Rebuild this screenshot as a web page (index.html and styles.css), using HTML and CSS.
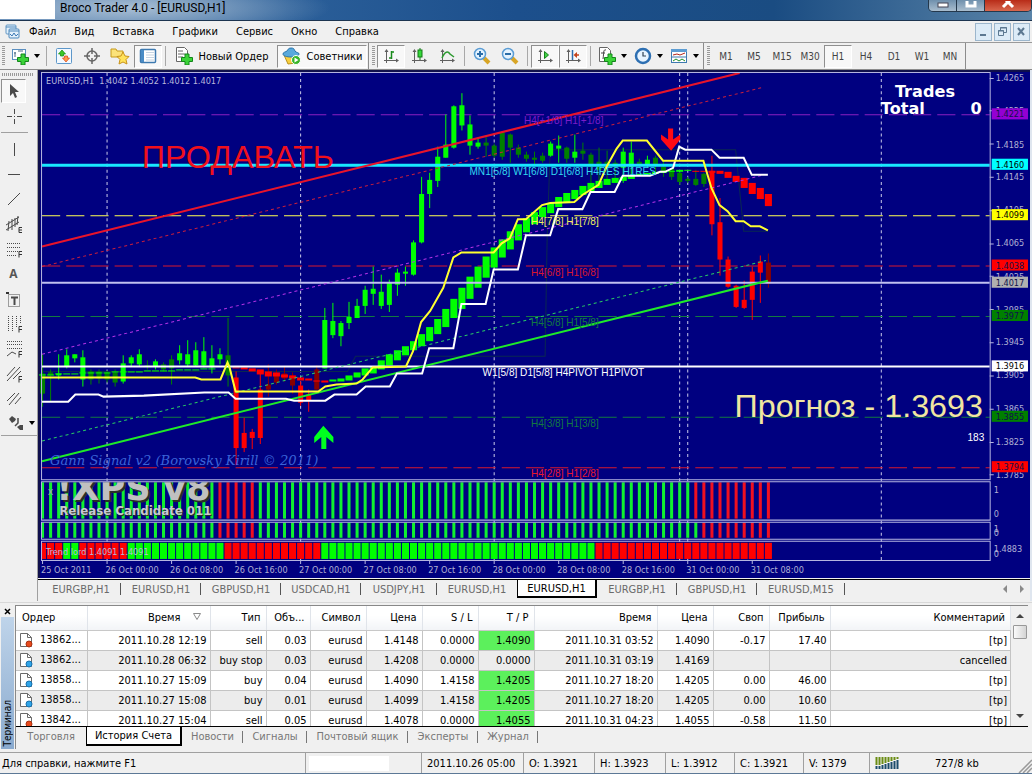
FILE: index.html
```html
<!DOCTYPE html>
<html lang="ru">
<head>
<meta charset="utf-8">
<title>Broco Trader 4.0 - [EURUSD,H1]</title>
<link rel="stylesheet" href="styles.css">
</head>
<body>
<div class="window">
  <header class="titlebar">
    <span class="logo-blank"></span>
    <span class="title">Broco Trader 4.0 - [EURUSD,H1]</span>
    <div class="caption-buttons">
      <button class="cap" aria-label="Свернуть"><svg width="12" height="10"><rect x="1" y="2" width="10" height="4" fill="#fff" stroke="#445"/></svg></button>
      <button class="cap" aria-label="Развернуть"><svg width="12" height="10"><rect x="2" y="-2" width="8" height="7" fill="none" stroke="#fff" stroke-width="3"/></svg></button>
      <button class="cap cap-close" aria-label="Закрыть"><svg width="14" height="10"><path d="M2 -4L12 6M12 -4L2 6" stroke="#fff" stroke-width="3"/></svg></button>
    </div>
  </header>

  <nav class="menubar">
    <svg class="menu-icon" width="15" height="15"><rect x="1" y="1" width="10" height="9" rx="1" fill="#e4f1fb" stroke="#6397c4"/><rect x="4" y="5" width="10" height="9" rx="1" fill="#e4f1fb" stroke="#4d87bb"/><path d="M1 3h10M4 7h10" stroke="#4d87bb"/><path d="M5 10l2 2 2-3 2 3 2-2" fill="none" stroke="#3c78b4"/></svg>
    <a href="#">Файл</a><a href="#">Вид</a><a href="#">Вставка</a><a href="#">Графики</a><a href="#">Сервис</a><a href="#">Окно</a><a href="#">Справка</a>
    <div class="mdi">
      <button aria-label="Свернуть окно"><svg width="11" height="11"><path d="M2 9h6" stroke="#5c7891" stroke-width="2"/></svg></button>
      <button aria-label="Восстановить окно"><svg width="11" height="11"><path d="M3.500 4V1.500h6v5H7M3 2h7" fill="none" stroke="#5c7891"/><path d="M1.500 4.500h5v5h-5zM1 5h6" fill="none" stroke="#5c7891"/></svg></button>
      <button aria-label="Закрыть окно"><svg width="11" height="11"><path d="M2 2l6 7M8 2L2 9" stroke="#5c7891" stroke-width="2"/></svg></button>
    </div>
  </nav>

  <div class="toolbar">
    <i class="grip"></i>
    <button class="tb wide" aria-label="Новый график"><svg width="18" height="18"><rect x="1.500" y="2.500" width="13" height="10" fill="#fff" stroke="#5b8fc0"/><path d="M4 5v5M3 6h2M7 4h5" stroke="#4d6b85"/><use href="#plus"/></svg><i class="caret"></i></button>
    <i class="sep"></i>
    <button class="tb" aria-label="Обзор рынка"><svg width="18" height="18"><rect x="1.500" y="1.500" width="15" height="15" rx="1" fill="#f3f9ff" stroke="#5d97c9"/><path d="M7 3l3.500 4H8.500v2h-3V7h-2z" fill="#3cc828" stroke="#138a0c" stroke-width=".7"/><path d="M11 15l3.500-4h-2V9h-3v2h-2z" fill="#ff9a4a" stroke="#d8441a" stroke-width=".7"/></svg></button>
    <button class="tb" aria-label="Окно данных"><svg width="18" height="18"><circle cx="9" cy="9" r="5" fill="none" stroke="#666" stroke-width="1.500"/><path d="M9 1v6M9 11v6M1 9h6M11 9h6" stroke="#666" stroke-width="1.500"/></svg></button>
    <button class="tb" aria-label="Навигатор"><svg width="20" height="18"><path d="M1 2h5l1 2h6v6H1z" fill="#fbe27a" stroke="#c79a1a"/><path d="M13 5l2 4 4 .500-3 3 1 4.500-4-2-4 2 1-4.500-3-3 4-.500z" fill="#ffe25a" stroke="#c8921a"/></svg></button>
    <button class="tb pressed" aria-label="Терминал"><svg width="18" height="18"><rect x="1.500" y="2.500" width="15" height="13" rx="1" fill="#fff" stroke="#3e7ab0" stroke-width="1.500"/><rect x="2" y="3" width="3" height="12" fill="#4a8cc6"/><path d="M7 5.500h8M7 8h8M7 10.500h8M7 13h8" stroke="#c6d4e2"/></svg></button>
    <i class="sep"></i>
    <button class="tb order"><svg width="18" height="18"><path d="M1.500.5h8l3 3v11h-11z" fill="#fff" stroke="#666"/><path d="M3 4h5M3 7h7M3 10h5" stroke="#666"/><use href="#plus"/></svg>Новый Ордер</button>
    <button class="tb experts pressed"><svg width="20" height="18"><path d="M2 8l13 0-1 8-8 1z" fill="#f8cf3e" stroke="#b8901c"/><path d="M1 7c0-2 3-2 4-3s1-3 4-3 3 1 4 3 4 1 4 3-4 3-8 3-8-1-8-3z" fill="#59a9dc" stroke="#2a74ab"/><circle cx="14" cy="13" r="4.500" fill="#38b528" stroke="#fff"/><path d="M12.500 10.500l4 2.500-4 2.500z" fill="#fff"/></svg>Советники</button>
    <i class="edge"></i><i class="grip"></i>
    <button class="tb pressed" aria-label="Бары"><svg width="18" height="18"><use href="#axes"/><path d="M9.500 4v8M9 5h3M7 11h3" stroke="#198a1c" stroke-width="1.500"/></svg></button>
    <button class="tb" aria-label="Свечи"><svg width="18" height="18"><use href="#axes"/><path d="M10 1v12" stroke="#127a14"/><rect x="8" y="3" width="4" height="7" fill="#35d83a" stroke="#127a14"/></svg></button>
    <button class="tb" aria-label="Линия"><svg width="18" height="18"><use href="#axes"/><path d="M4 11c3-7 6-7 8-4l4 3" fill="none" stroke="#2d9a30" stroke-width="1.500"/></svg></button>
    <i class="sep"></i>
    <button class="tb" aria-label="Приблизить"><svg width="18" height="18"><use href="#lens"/><path d="M7 4v6M4 7h6" stroke="#2a6da8" stroke-width="2"/></svg></button>
    <button class="tb" aria-label="Отдалить"><svg width="18" height="18"><use href="#lens"/><path d="M4 7h6" stroke="#2a6da8" stroke-width="2"/></svg></button>
    <i class="sep"></i>
    <button class="tb pressed" aria-label="Автопрокрутка"><svg width="18" height="18"><use href="#axes"/><path d="M8.500 4.500l4 3.500-4 3.500z" fill="#3fd044" stroke="#15821a"/></svg></button>
    <button class="tb pressed" aria-label="Сдвиг графика"><svg width="18" height="18"><use href="#axes"/><path d="M8.500 3v10" stroke="#2b6cae" stroke-width="1.500"/><path d="M15 8h-4" stroke="#c4421a" stroke-width="1.500"/><path d="M13 5v6l-3.500-3z" fill="#c4421a"/></svg></button>
    <i class="sep"></i>
    <button class="tb wide" aria-label="Индикаторы"><svg width="18" height="18"><path d="M1.500.5h8l3 3v11h-11z" fill="#fff" stroke="#666"/><path d="M8 3c-3-1-2 3-3 9M3 6h4" fill="none" stroke="#444"/><use href="#plus"/></svg><i class="caret"></i></button>
    <button class="tb wide" aria-label="Периоды"><svg width="18" height="18"><circle cx="9" cy="9" r="7" fill="#e8f4ff" stroke="#2d6fb2" stroke-width="2.500"/><path d="M9 5v4h3" fill="none" stroke="#345" stroke-width="1.200"/></svg><i class="caret"></i></button>
    <button class="tb wide" aria-label="Шаблоны"><svg width="18" height="18"><rect x="1.500" y="2.500" width="15" height="13" fill="#fff" stroke="#3e7ab0"/><rect x="1" y="2" width="16" height="3" fill="#5d9dd3"/><path d="M3 8l4-1 3 1 5-2" fill="none" stroke="#b3261a"/><path d="M1 10h16" stroke="#3e7ab0"/><path d="M3 14l3-2 3 2 3-2 3 2" fill="none" stroke="#1f8e25"/></svg><i class="caret"></i></button>
    <i class="edge"></i><i class="grip"></i>
    <button class="tb tf">M1</button><button class="tb tf">M5</button><button class="tb tf">M15</button><button class="tb tf">M30</button><button class="tb tf pressed">H1</button><button class="tb tf">H4</button><button class="tb tf">D1</button><button class="tb tf">W1</button><button class="tb tf">MN</button>
    <i class="edge"></i>
  </div>

  <main class="workspace">
    <aside class="tools">
      <i class="hgrip"></i>
      <button class="tool pressed" aria-label="Курсор"><svg width="18" height="18"><path d="M5 2v12l3-3 2 5 2-1-2-5h4z" fill="#4a4a4a"/></svg></button>
      <button class="tool" aria-label="Перекрестие"><svg width="18" height="18"><path d="M9.500 2v5M9.500 12v5M2 9.500h5M12 9.500h5M9 9.500h1" stroke="#4a4a4a"/></svg></button>
      <i class="hsep"></i>
      <button class="tool" aria-label="Вертикальная линия"><svg width="18" height="18"><path d="M9.500 3v13" stroke="#4a4a4a"/></svg></button>
      <button class="tool" aria-label="Горизонтальная линия"><svg width="18" height="18"><path d="M3 9.500h12" stroke="#4a4a4a"/></svg></button>
      <button class="tool" aria-label="Трендовая линия"><svg width="18" height="18"><path d="M3 15L15 3" stroke="#4a4a4a"/></svg></button>
      <button class="tool" aria-label="Канал"><svg width="18" height="18"><path d="M1 10L14 2M1 15L14 7M4 6l-1 10M7 4v11M10 3v9M13 1l-1 9" stroke="#4a4a4a"/><path d="M17 12.500h-3v5h3M14 15h3" fill="none" stroke="#333"/></svg></button>
      <button class="tool" aria-label="Фибоначчи"><svg width="18" height="18"><path d="M2 3.500h14M2 7.500h14M2 11.500h14M2 15.500h9" stroke="#4a4a4a" stroke-dasharray="1 1"/><use href="#fmark"/></svg></button>
      <button class="tool letter">A</button>
      <button class="tool" aria-label="Метка"><svg width="18" height="18"><rect x="3.500" y="4.500" width="11" height="12" fill="none" stroke="#4a4a4a" stroke-dasharray="1 1"/><path d="M6 7.500h7M9.500 8v7" stroke="#4a4a4a" stroke-width="2"/><path d="M1 3h3" stroke="#333" stroke-width="2"/></svg></button>
      <button class="tool" aria-label="Временные зоны"><svg width="18" height="18"><path d="M3.500 1v15M7.500 1v15M11.500 1v11M15.500 1v8" stroke="#4a4a4a" stroke-dasharray="1 1"/><use href="#fmark"/></svg></button>
      <button class="tool" aria-label="Веер"><svg width="18" height="18"><path d="M2 1.500h15M2 4.500h15M2 8.500h15" stroke="#4a4a4a" stroke-dasharray="1 1"/><path d="M2 16l5-4 4 2" fill="none" stroke="#4a4a4a"/><use href="#fmark"/></svg></button>
      <button class="tool" aria-label="Канал Фибоначчи"><svg width="18" height="18"><path d="M2 11L10 2M2 16L15 2M8 14l8-8" stroke="#4a4a4a"/><use href="#fmark"/></svg></button>
      <button class="tool" aria-label="Параллельные линии"><svg width="18" height="18"><path d="M2 11l8-8M4 15L14 3M10 14l6-7" stroke="#4a4a4a"/></svg></button>
      <button class="tool arrows" aria-label="Стрелки"><svg width="18" height="18"><path d="M2 5l3-3 4 3-1 2-3 2z" fill="#4a4a4a"/><path d="M11 4v5l-3 3" fill="none" stroke="#4a4a4a" stroke-width="1.500"/><path d="M10 13l3-2 3 0 0 5-3 0z" fill="#4a4a4a"/></svg><i class="caret"></i></button>
    </aside>

    <section class="chart-area">
      <svg class="chart" viewBox="38 71 984 504" id="chart">
        <rect x="38" y="71" width="984" height="504" fill="#000080"/>
        <path d="M38 72h984M39 71v504" stroke="#10104c" stroke-width="2"/>
        <g class="grid"><path d="M106.500 74V557M298.500 74V557M490.500 74V557M674.500 74V557M682.500 74V557M874.500 74V557"/></g>
        <path class="cloud" d="M42 370H345L353 355H541L543 240L546 150H730L738 231H762"/>
        <g class="level">
          <path d="M42 115.500H982" stroke="#8a1fc0"/><path d="M42 215.500H982" stroke="#ffff50"/><path d="M42 265.500H982" stroke="#d8182c"/><path d="M42 315.500H982" stroke="#127a40"/><path d="M42 415.500H982" stroke="#127a40"/><path d="M42 465.500H982" stroke="#d8182c"/>
        </g>
        <g id="candles"></g>
        <g id="ribbon"></g>
        <path d="M42 282H982" stroke="#c0c0f0" stroke-width="2"/>
        <path d="M42 365H982" stroke="#fff" stroke-width="2"/>
        <path d="M42 165.500H982" stroke="#18e8ff" stroke-width="3"/>
        <g fill="none">
          <path d="M42 246L734 74" stroke="#e8142a" stroke-width="2"/>
          <path d="M42 266L758 88" stroke="#c81e3c" stroke-dasharray="3 3"/>
          <path d="M42 353L758 175" stroke="#b432e6" stroke-dasharray="3 3"/>
          <path d="M42 439L760 260" stroke="#28c864" stroke-dasharray="3 3"/>
          <path d="M42 459L762 280" stroke="#1eeb28" stroke-width="2"/>
          <path d="M42 400H68L75 393H98L103 395L143 394L203 391H227L234 397H284L292 399H323L332 393H354L363 385H387L394 372H419L426 347H450L458 303H482L490 269H514L522 235H546L554 209H578L586 192H610L618 176H645L655 172H660L668 168L674 147L680 150H706L714 158H738L746 175H762" stroke="#fff" stroke-width="2"/>
          <path d="M42 376H194L200 378H219L226 361L228 366L234 390H316L323 385L334 383L354 382L360 378L370 366L403 365L410 350L418 321L427 310L440 287L450 257L458 252H490L498 243L506 238L514 219H522L538 205L546 203L570 202L578 195L594 185L602 167L612 149L618 141H642L658 161H698L706 188L714 205L722 211L730 221H738L745 226H754L762 230" stroke="#ffff30" stroke-width="2"/>
        </g>
        <path d="M663 129h5v11l7-5v5l-9 11-10-11v-5l7 5z" fill="#ff0a14"/>
        <path d="M319 447h5v-12l7 6v-6l-10-11-9 11v6l7-6z" fill="#00ff20"/>

        <text class="head" x="46" y="85">EURUSD,H1&#160; 1.4042 1.4052 1.4012 1.4017</text>
        <text class="signal" x="141" y="168">ПРОДАВАТЬ</text>
        <text class="forecast" x="729" y="415">Прогноз - 1.3693</text>
        <text class="stats" x="888" y="98">Trades</text><text class="stats" x="874" y="115">Total</text><text class="stats" x="963" y="115">0</text>
        <text class="lvl" x="960" y="439" fill="#fff">183</text>
        <text class="lvl" x="520" y="125" fill="#7a1cc8">H4[+1/8] H1[+1/8]</text>
        <text class="lvl" x="466" y="175" fill="#32d8f0">MN1[5/8] W1[6/8] D1[6/8] H4RES H1RES</text>
        <text class="lvl" x="527" y="225" fill="#f0f060">H4[7/8] H1[7/8]</text>
        <text class="lvl" x="527" y="275" fill="#d8182c">H4[6/8] H1[6/8]</text>
        <text class="lvl" x="527" y="325" fill="#127a40">H4[5/8] H1[5/8]</text>
        <text class="lvl" x="479" y="375" fill="#fff">W1[5/8] D1[5/8] H4PIVOT H1PIVOT</text>
        <text class="lvl" x="527" y="425" fill="#127a40">H4[3/8] H1[3/8]</text>
        <text class="lvl" x="527" y="475" fill="#e8182c">H4[2/8] H1[2/8]</text>
        <text class="gann" x="50" y="463">Gann Signal v2 (Borovsky Kirill © 2011)</text>

        <g id="indicators"></g>
        <clipPath id="xpsclip"><rect x="42" y="480" width="940" height="37"/></clipPath>
        <g clip-path="url(#xpsclip)">
          <text class="xps shadow" x="58" y="500">!XPS v8</text><text class="xps" x="56" y="498">!XPS v8</text>
          <text class="rc shadow" x="60" y="513">Release Candidate 011</text><text class="rc" x="59" y="512">Release Candidate 011</text>
        </g>
        <text class="lvl" x="48" y="493" fill="#a0a0c0">x</text>
        <text class="head" x="46" y="552">Trend lord 1.4091 1.4091</text>
        <g class="frame"><path d="M41.500 73.500h941v404h-941zM41.500 479.500h941v38h-941zM41.500 519.500h941v17h-941zM41.500 538.500h941v19h-941z"/><path d="M982 79.500h4M982 111.500h4M982 144.500h4M982 177.500h4M982 210.500h4M982 243.500h4M982 275.500h4M982 308.500h4M982 341.500h4M982 374.500h4M982 407.500h4M982 440.500h4M982 472.500h4M42.500 558v3M106.500 558v3M170.500 558v3M234.500 558v3M298.500 558v3M362.500 558v3M426.500 558v3M490.500 558v3M554.500 558v3M618.500 558v3M682.500 558v3M746.500 558v3"/></g>
        <g id="axis"></g>
      </svg>
      <nav class="chart-tabs">
        <a href="#">EURGBP,H1</a><a href="#">EURUSD,H1</a><a href="#">GBPUSD,H1</a><a href="#">USDCAD,H1</a><a href="#" class="narrow">USDJPY,H1</a><a href="#" class="plain">EURUSD,H1</a><a href="#" class="active">EURUSD,H1</a><a href="#">EURGBP,H1</a><a href="#">GBPUSD,H1</a><a href="#" class="long">EURUSD,M15</a>
        <span class="tab-scroll"><svg width="24" height="8"><path d="M5 0v8L1 4zM18 0v8l4-4z" fill="#8a8a8a"/></svg></span>
      </nav>
    </section>
  </main>

  <section class="terminal">
    <div class="term-side"><button class="term-close" aria-label="Закрыть терминал"><svg width="7" height="7"><path d="M1 1l5 5M6 1L1 6" stroke="#000" stroke-width="1.500"/></svg></button><div class="term-title"><span>Терминал</span></div></div>
    <div class="term-main">
      <div class="term-body">
        <div class="table-clip">
        <table>
          <colgroup><col class="c-order"><col class="c-time"><col class="c-56"><col class="c-vol"><col class="c-56"><col class="c-56"><col class="c-56"><col class="c-56"><col class="c-time"><col class="c-56"><col class="c-56"><col class="c-profit"><col></colgroup>
          <thead><tr><th class="first">Ордер</th><th>Время<svg class="sort" width="8" height="8"><path d="M.5.5h7L4 6.500z" fill="#fff" stroke="#8a8a8a"/></svg></th><th>Тип</th><th>Объ...</th><th>Символ</th><th>Цена</th><th>S / L</th><th>T / P</th><th>Время</th><th>Цена</th><th>Своп</th><th>Прибыль</th><th>Комментарий</th></tr></thead>
          <tbody>
            <tr><td class="first"><svg width="16" height="16"><use href="#doc"/><circle cx="11" cy="12" r="3" fill="#e84a1c" stroke="#a83010"/></svg>13862...</td><td>2011.10.28 12:19</td><td>sell</td><td>0.03</td><td>eurusd</td><td>1.4148</td><td>0.0000</td><td class="hit">1.4090</td><td>2011.10.31 03:52</td><td>1.4090</td><td>-0.17</td><td>17.40</td><td>[tp]</td></tr>
            <tr><td class="first"><svg width="16" height="16"><use href="#doc"/><circle cx="11" cy="12" r="3" fill="#2fa4e8" stroke="#1670ac"/></svg>13862...</td><td>2011.10.28 06:32</td><td>buy stop</td><td>0.03</td><td>eurusd</td><td>1.4208</td><td>0.0000</td><td>0.0000</td><td>2011.10.31 03:19</td><td>1.4169</td><td></td><td></td><td>cancelled</td></tr>
            <tr><td class="first"><svg width="16" height="16"><use href="#doc"/><circle cx="11" cy="12" r="3" fill="#2fa4e8" stroke="#1670ac"/></svg>13858...</td><td>2011.10.27 15:09</td><td>buy</td><td>0.04</td><td>eurusd</td><td>1.4090</td><td>1.4158</td><td class="hit">1.4205</td><td>2011.10.27 18:20</td><td>1.4205</td><td>0.00</td><td>46.00</td><td>[tp]</td></tr>
            <tr><td class="first"><svg width="16" height="16"><use href="#doc"/><circle cx="11" cy="12" r="3" fill="#2fa4e8" stroke="#1670ac"/></svg>13858...</td><td>2011.10.27 15:08</td><td>buy</td><td>0.01</td><td>eurusd</td><td>1.4099</td><td>1.4158</td><td class="hit">1.4205</td><td>2011.10.27 18:20</td><td>1.4205</td><td>0.00</td><td>10.60</td><td>[tp]</td></tr>
            <tr><td class="first"><svg width="16" height="16"><use href="#doc"/><circle cx="11" cy="12" r="3" fill="#e84a1c" stroke="#a83010"/></svg>13842...</td><td>2011.10.27 15:04</td><td>sell</td><td>0.05</td><td>eurusd</td><td>1.4078</td><td>0.0000</td><td class="hit">1.4055</td><td>2011.10.31 04:23</td><td>1.4055</td><td>-0.58</td><td>11.50</td><td>[tp]</td></tr>
          </tbody>
        </table>
        </div>
        <div class="scroll"><svg width="8" height="5"><path d="M0 5h8L4 1z" fill="#444"/></svg><span class="thumb"></span><svg class="down" width="8" height="5"><path d="M0 0h8L4 4z" fill="#444"/></svg></div>
      </div>
      <nav class="term-tabs">
        <a href="#" class="w-trade">Торговля</a><a href="#" class="active">История Счета</a><a href="#" class="w-news">Новости</a><a href="#" class="w-sig">Сигналы</a><a href="#" class="w-mail">Почтовый ящик</a><a href="#" class="w-exp">Эксперты</a><a href="#" class="w-log">Журнал</a>
      </nav>
    </div>
  </section>

  <footer class="status">
    <span class="help">Для справки, нажмите F1</span>
    <span class="profile"><i></i></span>
    <span class="s-date">2011.10.26 05:00</span><span class="s-o">O: 1.3921</span><span class="s-o">H: 1.3923</span><span class="s-l">L: 1.3912</span><span class="s-l">C: 1.3921</span><span class="s-v">V: 1379</span>
    <span class="s-net"><svg width="24" height="12"><path d="M1.500 0v8M4.500 0v8M7.500 0v7M10.500 0v6M13.500 0v5M16.500 0v4M19.500 0v3M22.500 0v2" stroke="#6a8c14" stroke-width="2"/><path d="M1.500 9v3M4.500 9v3M7.500 8v4M10.500 7v5M13.500 6v6M16.500 5v7M19.500 4v8M22.500 3v9" stroke="#1c4c6c" stroke-width="2"/></svg><b>727/8 kb</b></span>
    <svg class="resize" width="14" height="14"><path d="M1 14L14 1M5 14l9-9M9 14l5-5" stroke="#999" stroke-width="1.500"/></svg>
  </footer>
</div>

<svg width="0" height="0" class="defs">
  <defs>
    <g id="plus"><path d="M10 7h4v3.500h3.500v4H14V18h-4v-3.500H6.500v-4H10z" fill="#3bd238" stroke="#12861a"/></g>
    <g id="axes"><path d="M4.500 3v13M2 13.500h14" stroke="#606060"/><path d="M2.500 5l2-3 2 3zM14 11.500l3 2-3 2z" fill="#606060"/></g>
    <g id="lens"><path d="M11 11l5 5" stroke="#d8a526" stroke-width="4"/><circle cx="7" cy="7" r="5.500" fill="#e4f3ff" stroke="#5a9cd4" stroke-width="1.500"/></g>
    <g id="fmark"><path d="M17 11.500h-3v6M14 14.500h3" fill="none" stroke="#333"/></g>
    <g id="doc"><path d="M2.500 1.500h7l4 4v9h-11z" fill="#fff" stroke="#6a6a6a"/><path d="M9.500 1.500v4h4" fill="none" stroke="#6a6a6a"/></g>
  </defs>
</svg>
<script src="chart.js"></script>
</body>
</html>
```
FILE: styles.css
```css
* { box-sizing: border-box; }
body { margin: 0; background: #f0f0f0; font: 11px "DejaVu Sans Condensed", "Noto Sans", sans-serif; color: #000; }
a { color: inherit; text-decoration: none; }
button { font: inherit; color: inherit; border: 0; background: none; padding: 0; display: flex; align-items: center; justify-content: center; }
svg { flex: none; }
.defs { position: absolute; }
.window { display: flex; flex-direction: column; min-height: 100vh; background: #f0f0f0; overflow: hidden; }

.titlebar { height: 21px; display: flex; align-items: flex-start; border-bottom: 1px solid #1c3450; background: radial-gradient(ellipse 200px 30px at 130px 8px, #a9bfd4, transparent), linear-gradient(90deg, #5c86b4, #2b5f99 28%, #1c4f8c 50%, #1a4c82 75%, #5a84a8); }
.logo-blank { width: 55px; height: 19px; background: #fff; }
.title { font: 12px/16px Roboto, "Noto Sans", sans-serif; margin-left: 5px; }
.caption-buttons { margin-left: auto; display: flex; border: 1px solid #24384c; border-top: 0; border-radius: 0 0 5px 5px; overflow: hidden; }
.cap { width: 28px; height: 11px; background: linear-gradient(#6f90ad, #a9bdce); border-right: 1px solid #24384c; }
.cap-close { width: 46px; background: linear-gradient(#b82c18, #d8674e); border-right: 0; }

.menubar { height: 22px; display: flex; align-items: center; padding-left: 5px; border-bottom: 1px solid #9a9a9a; gap: 18px; }
.menu-icon { margin-right: -9px; }
.mdi { margin-left: auto; display: flex; gap: 2px; padding-right: 2px; }
.mdi button { width: 17px; height: 18px; border: 1px solid #9cb6cc; background: #dcebf7; }

.toolbar { height: 27px; display: flex; align-items: center; border-bottom: 1px solid #8c8c8c; }
.grip { width: 3px; height: 20px; margin: 0 2px; background: repeating-linear-gradient(#9a9a9a 0 1px, #f0f0f0 1px 2px); }
.sep { width: 1px; height: 20px; margin: 0 3px; background: #a8a8a8; }
.edge { width: 1px; height: 26px; margin: 0 1px; background: #8c8c8c; }
.tb { width: 28px; height: 23px; flex: none; }
.tb.wide { width: 36px; gap: 5px; }
.tb.pressed { border: 1px solid; border-color: #8f8f8f #fff #fff #8f8f8f; background: #f8f8f8; }
.order { width: 106px; gap: 5px; }
.experts { width: 90px; gap: 5px; margin-left: 2px; }
.tf { font-size: 10px; color: #444; }
.caret { width: 0; height: 0; border: 3px solid transparent; border-top: 4px solid #000; border-bottom: 0; }

.workspace { display: flex; }
.tools { width: 38px; flex: none; padding-left: 1px; border-right: 1px solid #a0a0a0; }
.hgrip { display: block; width: 32px; height: 3px; margin: 3px 0 3px 1px; background: repeating-linear-gradient(90deg, #9a9a9a 0 1px, #f0f0f0 1px 2px); }
.tool { width: 25px; height: 25px; }
.tool.pressed { height: 24px; border: 1px solid; border-color: #8f8f8f #fff #fff #8f8f8f; background: #f8f8f8; }
.hsep { display: block; width: 27px; height: 1px; margin: 4px 0 3px; background: #a0a0a0; }
.letter { font: bold 12px "Open Sans", sans-serif; color: #555; }
.arrows { width: 37px; gap: 4px; padding-left: 3px; border-bottom: 1px solid #a0a0a0; }

.chart-area { flex: 1; min-width: 0; display: flex; flex-direction: column; border-right: 2px solid #dfe6ef; }
.chart { display: block; width: 100%; height: auto; }
.chart text { font-family: "DejaVu Sans Condensed", sans-serif; font-size: 9px; }
.grid { stroke: #c8c8e8; stroke-dasharray: 3 3; }
.cloud { fill: none; stroke: #0a2850; }
.level { stroke-dasharray: 18 6; }
.frame { fill: none; stroke: #b4b4e0; }
.chart .head { fill: #b8b8dc; }
.chart .tick { fill: #b0b0d4; }
.chart .signal { font: 32px "Liberation Sans", sans-serif; fill: #f0101c; }
.chart .forecast { font: 32px "Liberation Sans", sans-serif; fill: #f0e6a0; }
.chart .stats { font: bold 16px "DejaVu Sans", sans-serif; fill: #fff; }
.chart .lvl { font: 10px "Liberation Sans", sans-serif; }
.chart .gann { font: italic 13px "DejaVu Serif", serif; fill: #3a64d8; }
.chart .xps { font: bold 35px "DejaVu Sans", sans-serif; fill: #c0c0c0; }
.chart .rc { font: bold 13px "DejaVu Sans Condensed", sans-serif; fill: #c8c8d0; }
.chart .shadow { fill: #283028; }

.chart-tabs { height: 22px; display: flex; margin-top: 1px; border-top: 1px solid #000; padding: 0 4px 3px 3px; color: #6a6a6a; }
.chart-tabs a { width: 80px; display: flex; align-items: center; justify-content: center; background: linear-gradient(#555, #555) right center / 1px 12px no-repeat; }
.chart-tabs .narrow { width: 76px; }
.chart-tabs .plain { background: none; }
.chart-tabs .long { width: 88px; }
.active { color: #000; }
.chart-tabs .active, .term-tabs .active { background: #fff; border: solid #000; border-width: 0 2px 2px 1px; }
.tab-scroll { margin-left: auto; align-self: center; }

.terminal { display: flex; flex: 1; border-top: 1px solid #d8d8d8; margin-top: 1px; padding: 2px 4px 3px 0; }
.term-side { width: 15px; flex: none; display: flex; flex-direction: column; padding-left: 1px; }
.term-close { width: 13px; height: 12px; }
.term-title { flex: 1; width: 13px; background: linear-gradient(#bfd4ea, #8aaace); display: flex; align-items: flex-end; justify-content: center; padding-bottom: 2px; }
.term-title span { writing-mode: vertical-rl; transform: rotate(180deg); font-size: 10px; line-height: 13px; }
.term-main { flex: 1; min-width: 0; display: flex; flex-direction: column; border-top: 1px solid #888; border-left: 1px solid #888; }
.term-body { height: 121px; display: flex; border-bottom: 1px solid #000; background: #fff; }
.table-clip { flex: 1; min-width: 0; overflow: hidden; }
table { width: 100%; border-collapse: collapse; table-layout: fixed; }
.c-order { width: 71px; } .c-time { width: 123px; } .c-56 { width: 56px; } .c-vol { width: 44px; } .c-profit { width: 61px; }
th { height: 24px; padding: 0 5px 0 2px; text-align: right; font-weight: normal; white-space: nowrap; border-right: 1px solid #e0e4ea; border-bottom: 1px solid #c8c8c8; background: linear-gradient(#fff 40%, #f2f4f7); }
td { height: 20px; padding: 0 3px 0 0; text-align: right; white-space: nowrap; border: 1px solid #c4c4c4; border-width: 0 1px 1px 0; }
.first { text-align: left; }
th.first { padding-left: 6px; }
td.first svg { vertical-align: -5px; margin: 0 6px 0 2px; }
.sort { margin: 0 4px 0 12px; }
tbody tr:nth-child(even) { background: #ececec; }
.hit { background: #5cf05c; }
.scroll { width: 17px; flex: none; background: #f0f0f0; display: flex; flex-direction: column; align-items: center; padding: 7px 0; gap: 7px; }
.thumb { width: 14px; height: 14px; border: 1px solid #989898; border-radius: 1px; background: linear-gradient(90deg, #fafafa, #d4d4d4); }
.down { margin-top: auto; }
.term-tabs { height: 19px; display: flex; color: #777; }
.term-tabs a { display: flex; align-items: center; justify-content: center; background: linear-gradient(#777, #777) right center / 1px 12px no-repeat; }
.term-tabs .w-trade { width: 70px; background: none; }
.term-tabs .active { width: 96px; color: #000; }
.w-news { width: 61px; } .w-sig { width: 64px; } .w-mail { width: 101px; } .w-exp { width: 70px; } .w-log { width: 60px; }

.status { height: 22px; display: flex; align-items: stretch; border-top: 1px solid #a0a0a0; border-bottom: 1px solid #5c7896; }
.status span { display: flex; align-items: center; padding-left: 5px; border-left: 1px solid #a0a0a0; white-space: nowrap; }
.status .help { flex: 1; padding-left: 2px; border: 0; }
.profile { width: 116px; }
.status .profile { padding-left: 3px; }
.profile i { width: 80px; height: 15px; background: #fff; }
.s-date { width: 102px; } .s-o { width: 71px; } .s-l { width: 69px; } .s-v { width: 66px; }
.s-net { width: 149px; gap: 36px; }
.s-net b { font-weight: normal; }
.resize { align-self: flex-end; }
```
FILE: chart.js
```js
const NS = "http://www.w3.org/2000/svg";
const colors = { g: "#00ff00", d: "#008000", r: "#ff0000", m: "#8b0000" };
const barX = i => 42 + i * 8;

function add(parent, tag, attrs, text) {
  const el = document.createElementNS(NS, tag);
  for (const key in attrs) el.setAttribute(key, attrs[key]);
  if (text !== undefined) el.textContent = text;
  document.getElementById(parent).appendChild(el);
}

// colour, wick top, wick bottom, body top, body bottom
const candles = `d 353 405 372 392,d 368 400 371 374,g 353 378 372 374,g 348 367 354 365,g 353 361 353 357,g 349 385 356 378,d 368 383 370 378,d 368 382 370 377,d 369 381 371 378,d 368 385 371 381,
g 354 382 362 380,g 354 365 356 362,g 348 365 353 363,d 359 368 364 364,g 358 368 360 365,d 361 370 363 368,d 354 383 358 367,g 344 363 352 359,g 339 365 353 363,g 341 365 349 364,
g 336 366 350 364,g 344 372 357 366,g 347 363 353 358,d 317 385 354 374,r 370 463 376 446,r 416 450 431 446,r 427 447 430 436,r 370 442 388 436,m 363 395 383 388,m 368 383 373 381,
m 365 380 372 377,m 371 392 374 384,r 380 404 384 401,r 388 410 393 399,m 364 388 368 388,g 307 367 319 367,g 302 337 320 334,g 320 345 322 335,g 301 328 316 322,g 298 317 305 317,
g 285 313 289 305,g 266 304 288 293,g 274 308 291 305,g 279 311 282 304,g 268 295 272 284,g 266 285 271 273,g 240 275 242 274,g 177 243 194 242,g 173 208 180 194,g 147 187 157 181,
g 115 158 145 158,g 106 149 107 148,g 94 131 106 126,g 116 155 125 146,g 138 149 143 147,d 137 157 143 146,d 144 158 146 156,d 132 160 133 157,d 134 163 135 148,d 145 158 148 155,
d 152 162 155 159,d 152 166 158 160,d 153 163 156 161,g 142 157 144 156,g 136 163 146 149,d 147 163 148 159,g 135 163 152 158,d 143 160 151 154,d 153 183 155 167,d 148 187 162 170,
d 151 183 162 168,d 160 178 163 167,g 148 183 152 168,g 142 177 153 167,d 159 168 162 166,g 156 168 160 166,d 156 175 158 166,d 160 177 167 173,d 168 180 169 177,d 172 185 173 182,
d 177 183 179 181,d 170 186 179 185,d 173 187 174 184,r 156 235 171 224,r 198 275 222 259,r 256 287 259 286,r 284 307 285 306,r 280 308 299 307,r 266 319 271 299,r 255 302 261 272,m 253 287 262 283`.split(",");
candles.forEach((row, i) => {
  const [c, wt, wb, bt, bb] = row.trim().split(" ");
  add("candles", "rect", { x: barX(i), y: wt, width: 1, height: wb - wt, fill: colors[c] });
  add("candles", "rect", { x: barX(i) - 2, y: bt, width: 5, height: Math.max(1, bb - bt), fill: colors[c] });
});

// starting bar, colour, then top-bottom of each following bar
const ribbons = [
  [0, "g", "373-374 373-374 372-373 372-373 372-373 371-372 371-372 371-372 371-372 370-371 370-371 370-371 370-371 369-370 369-370 369-370 369-370 368-369 368-369 368-369 367-368 367-368"],
  [24, "r", "366-367 366-368 367-370 368-373 370-375 371-375 373-376 374-377 376-379 377-379 379-380 379-381"],
  [36, "g", "378-380 377-380 374-379 371-376 367-374 365-372 359-368 353-364 349-359 345-354 340-349 333-345 326-340 318-333 308-326 298-317 287-308 276-298 266-287 256-277 247-267 239-257 231-249 224-240 218-232 212-224 207-217 203-213 197-207 193-203 190-199 186-195 183-191 181-188 179-185 178-183 177-181 176-179 174-176 173-175 172-174 171-173 171-172 170-172 170-171"],
  [81, "r", "171-172 171-172 171-173 171-174 172-178 176-182 178-188 183-194 188-199 194-206"]
];
ribbons.forEach(([start, c, spans]) => spans.split(" ").forEach((s, k) => {
  const [top, bottom] = s.split("-");
  add("ribbon", "rect", { x: barX(start + k) - 3, y: top, width: 7, height: bottom - top, fill: colors[c] });
}));

const within = (i, ranges) => ranges.some(([a, b]) => i >= a && i <= b);
for (let i = 0; i <= 90; i++) {
  const first = within(i, [[22, 26], [81, 90]]) ? "#f01020" : "#10f030";
  const second = within(i, [[22, 26], [82, 90]]) ? "#f01020" : "#10f030";
  const third = within(i, [[0, 2], [5, 10], [23, 34], [69, 90]]) ? "#ff0000" : "#00ff00";
  add("indicators", "rect", { x: barX(i) - 1, y: 480, width: 3, height: 36, fill: first });
  add("indicators", "rect", { x: barX(i) - 1, y: 520, width: 3, height: 15, fill: second });
  const x = Math.max(42, barX(i) - 3);
  add("indicators", "rect", { x, y: 540, width: barX(i) + 4 - x, height: 16, fill: third });
}

for (let k = 0; k < 13; k++) {
  add("axis", "text", { class: "tick", x: 988, y: Math.round(82 + k * 32.8) }, (1.4265 - k * 0.004).toFixed(4));
}
[["1", 491], ["0", 514], ["1", 529], ["0", 533], ["0", 554]].forEach(([t, y]) => add("axis", "text", { class: "tick", x: 986, y }, t));
add("axis", "text", { class: "tick", x: 986, y: 549 }, "1.4883");

[["1.4221", 115, "#9400d3", "#10104c"], ["1.4160", 165, "#00ffff", "#000"], ["1.4099", 215, "#ffff00", "#000"], ["1.4038", 265, "#ff0000", "#10104c"], ["1.4017", 282, "#b0b0b0", "#10104c"],
 ["1.3977", 315, "#008000", "#10104c"], ["1.3916", 365, "#ffffff", "#000"], ["1.3855", 415, "#008000", "#10104c"], ["1.3794", 465, "#ff0000", "#10104c"]].forEach(([t, y, bg, fg]) => {
  add("axis", "rect", { x: 984, y: y - 6, width: 36, height: 11, fill: bg });
  add("axis", "text", { x: 988, y: y + 3, fill: fg }, t);
});

["25 Oct 2011", "26 Oct 00:00", "26 Oct 08:00", "26 Oct 16:00", "27 Oct 00:00", "27 Oct 08:00", "27 Oct 16:00", "28 Oct 00:00", "28 Oct 08:00", "28 Oct 16:00", "31 Oct 00:00", "31 Oct 08:00"]
  .forEach((t, k) => add("axis", "text", { class: "tick", x: 41 + k * 64, y: 570 }, t));
```
